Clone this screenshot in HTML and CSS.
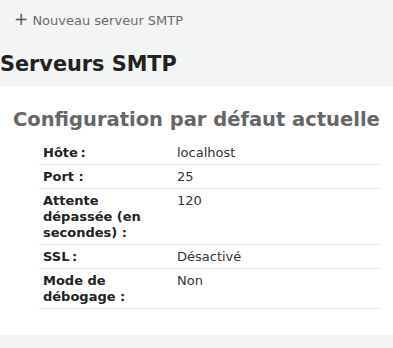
FILE: index.html
```html
<!DOCTYPE html>
<html lang="fr">
<head>
    <meta charset="UTF-8">
    <meta name="viewport" content="width=device-width, initial-scale=1.0">
    <title>Serveurs SMTP</title>
    <link rel="stylesheet" href="styles.css">
</head>
<body>
    <div class="barreActions">
        <a href="#" class="lienAjout"><span class="plus">+</span> Nouveau serveur SMTP</a>
    </div>

    <h1>Serveurs SMTP</h1>

    <section class="panneau">
        <h2>Configuration par défaut actuelle</h2>

        <table class="tableConfig">
            <tr>
                <th>Hôte&#8239;:</th>
                <td>localhost</td>
            </tr>
            <tr>
                <th>Port :</th>
                <td>25</td>
            </tr>
            <tr>
                <th>Attente dépassée (en secondes) :</th>
                <td>120</td>
            </tr>
            <tr>
                <th>SSL&#8239;:</th>
                <td>Désactivé</td>
            </tr>
            <tr>
                <th>Mode de débogage :</th>
                <td>Non</td>
            </tr>
        </table>
    </section>
</body>
</html>
```

FILE: styles.css
```css
* {
    margin: 0;
    padding: 0;
    box-sizing: border-box;
    font-family: "DejaVu Sans", Verdana, sans-serif;
}

body {
    background: #f3f4f4;
    color: #333;
    font-size: 13px;
    line-height: 16px;
}

.barreActions {
    height: 27px;
    padding: 11px 14px 0;
}

.lienAjout {
    color: #6b6b6b;
    text-decoration: none;
}

.lienAjout .plus {
    font-size: 17px;
    line-height: 16px;
    color: #555;
}

h1 {
    margin-top: 25px;
    font-size: 20.8px;
    line-height: 24px;
    color: #222;
}

.panneau {
    margin-top: 10px;
    background: #fff;
    padding: 22px 13px 26px;
}

h2 {
    font-size: 19.5px;
    line-height: 23px;
    color: #666;
}

.tableConfig {
    margin-top: 10px;
    margin-left: 26px;
    width: calc(100% - 26px);
    border-collapse: collapse;
}

.tableConfig th,
.tableConfig td {
    text-align: left;
    vertical-align: top;
    padding: 4px 4px 3px;
    border-bottom: 1px solid #e8e8e8;
}

.tableConfig th {
    width: 134px;
    color: #222;
    font-weight: bold;
}

.tableConfig td {
    color: #333;
}
```
